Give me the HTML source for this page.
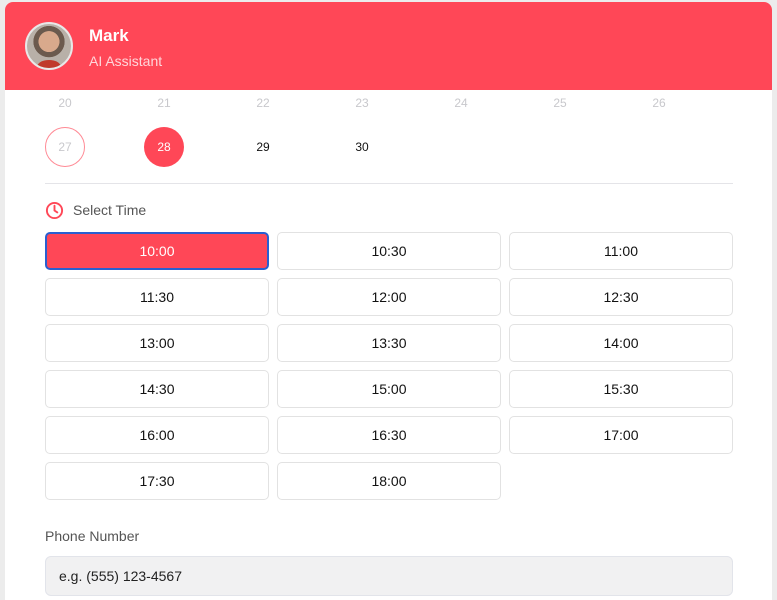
<!DOCTYPE html>
<html style="width:777px;height:600px;overflow:hidden"><head><style>
*{box-sizing:border-box;margin:0;padding:0}
body{width:777px;height:600px;overflow:hidden;background:#ececec;font-family:"Liberation Sans",Arial,sans-serif;position:relative}
.card{position:absolute;left:5px;top:2px;width:767px;height:598px;background:#fff;border-radius:8px 8px 0 0;overflow:hidden}
.av{position:absolute;left:20px;top:20px;width:48px;height:48px;border-radius:50%;border:2px solid #e8e8e8;background:radial-gradient(circle at 50% 40%,#d9a98c 0 30%,#6b5a4e 31% 45%,#b8b0a8 46%);overflow:hidden}
.av:after{content:"";position:absolute;left:10px;top:36px;width:24px;height:14px;border-radius:50% 50% 0 0;background:#c0392b}
.name{position:absolute;color:#fff;font-weight:bold;font-size:17px}
.role{position:absolute;color:#ffd6da;font-size:14px}
.d{position:absolute;width:40px;text-align:center;font-size:12px}
.r1{top:96px;color:#c8c8cc}
.c{top:127px;height:40px;line-height:40px;border-radius:50%}
.line{position:absolute;left:45px;top:183px;width:688px;height:1px;background:#e4e4e8}
.lbl{position:absolute;font-size:14px;color:#555}
.b{position:absolute;width:224px;height:38px;border:1px solid #e2e2e2;border-radius:5px;text-align:center;line-height:36px;font-size:14px;color:#111;background:#fff}
.sel{background:#ff4757;color:#fff;border:2px solid #2a5fd0;line-height:34px}
.inp{position:absolute;left:45px;top:556px;width:688px;height:40px;background:#f1f1f2;border:1px solid #e2e4ea;border-radius:6px;font-size:14px;line-height:38px;padding-left:13px;color:#222}
</style></head><body>
<div class="card"></div>
<div style="position:absolute;left:5px;top:2px;width:767px;height:88px;background:#ff4757;border-radius:8px 8px 0 0"></div>
<div class="av" style="left:25px;top:22px"></div>
<div class="name" style="left:89px;top:26px">Mark</div>
<div class="role" style="left:89px;top:53px">AI Assistant</div>
<div class="d r1" style="left:45px">20</div><div class="d r1" style="left:144px">21</div><div class="d r1" style="left:243px">22</div><div class="d r1" style="left:342px">23</div><div class="d r1" style="left:441px">24</div><div class="d r1" style="left:540px">25</div><div class="d r1" style="left:639px">26</div>
<div class="d c" style="left:45px;border:1px solid #ff8a95;color:#c8c8cc;line-height:38px">27</div>
<div class="d c" style="left:144px;background:#ff4757;color:#fff">28</div>
<div class="d c" style="left:243px;color:#111">29</div>
<div class="d c" style="left:342px;color:#111">30</div>
<div class="line"></div>
<svg style="position:absolute;left:45px;top:201px" width="19" height="19" viewBox="0 0 20 20"><circle cx="10" cy="10" r="8" fill="none" stroke="#ff4757" stroke-width="2"/><path d="M10 5v5l3 2" fill="none" stroke="#ff4757" stroke-width="2" stroke-linecap="round"/></svg>
<div class="lbl" style="left:73px;top:202px">Select Time</div>
<div class="b sel" style="left:45px;top:232px">10:00</div><div class="b" style="left:277px;top:232px">10:30</div><div class="b" style="left:509px;top:232px">11:00</div>
<div class="b" style="left:45px;top:278px">11:30</div><div class="b" style="left:277px;top:278px">12:00</div><div class="b" style="left:509px;top:278px">12:30</div>
<div class="b" style="left:45px;top:324px">13:00</div><div class="b" style="left:277px;top:324px">13:30</div><div class="b" style="left:509px;top:324px">14:00</div>
<div class="b" style="left:45px;top:370px">14:30</div><div class="b" style="left:277px;top:370px">15:00</div><div class="b" style="left:509px;top:370px">15:30</div>
<div class="b" style="left:45px;top:416px">16:00</div><div class="b" style="left:277px;top:416px">16:30</div><div class="b" style="left:509px;top:416px">17:00</div>
<div class="b" style="left:45px;top:462px">17:30</div><div class="b" style="left:277px;top:462px">18:00</div>
<div class="lbl" style="left:45px;top:528px">Phone Number</div>
<div class="inp">e.g. (555) 123-4567</div>
</body></html>
